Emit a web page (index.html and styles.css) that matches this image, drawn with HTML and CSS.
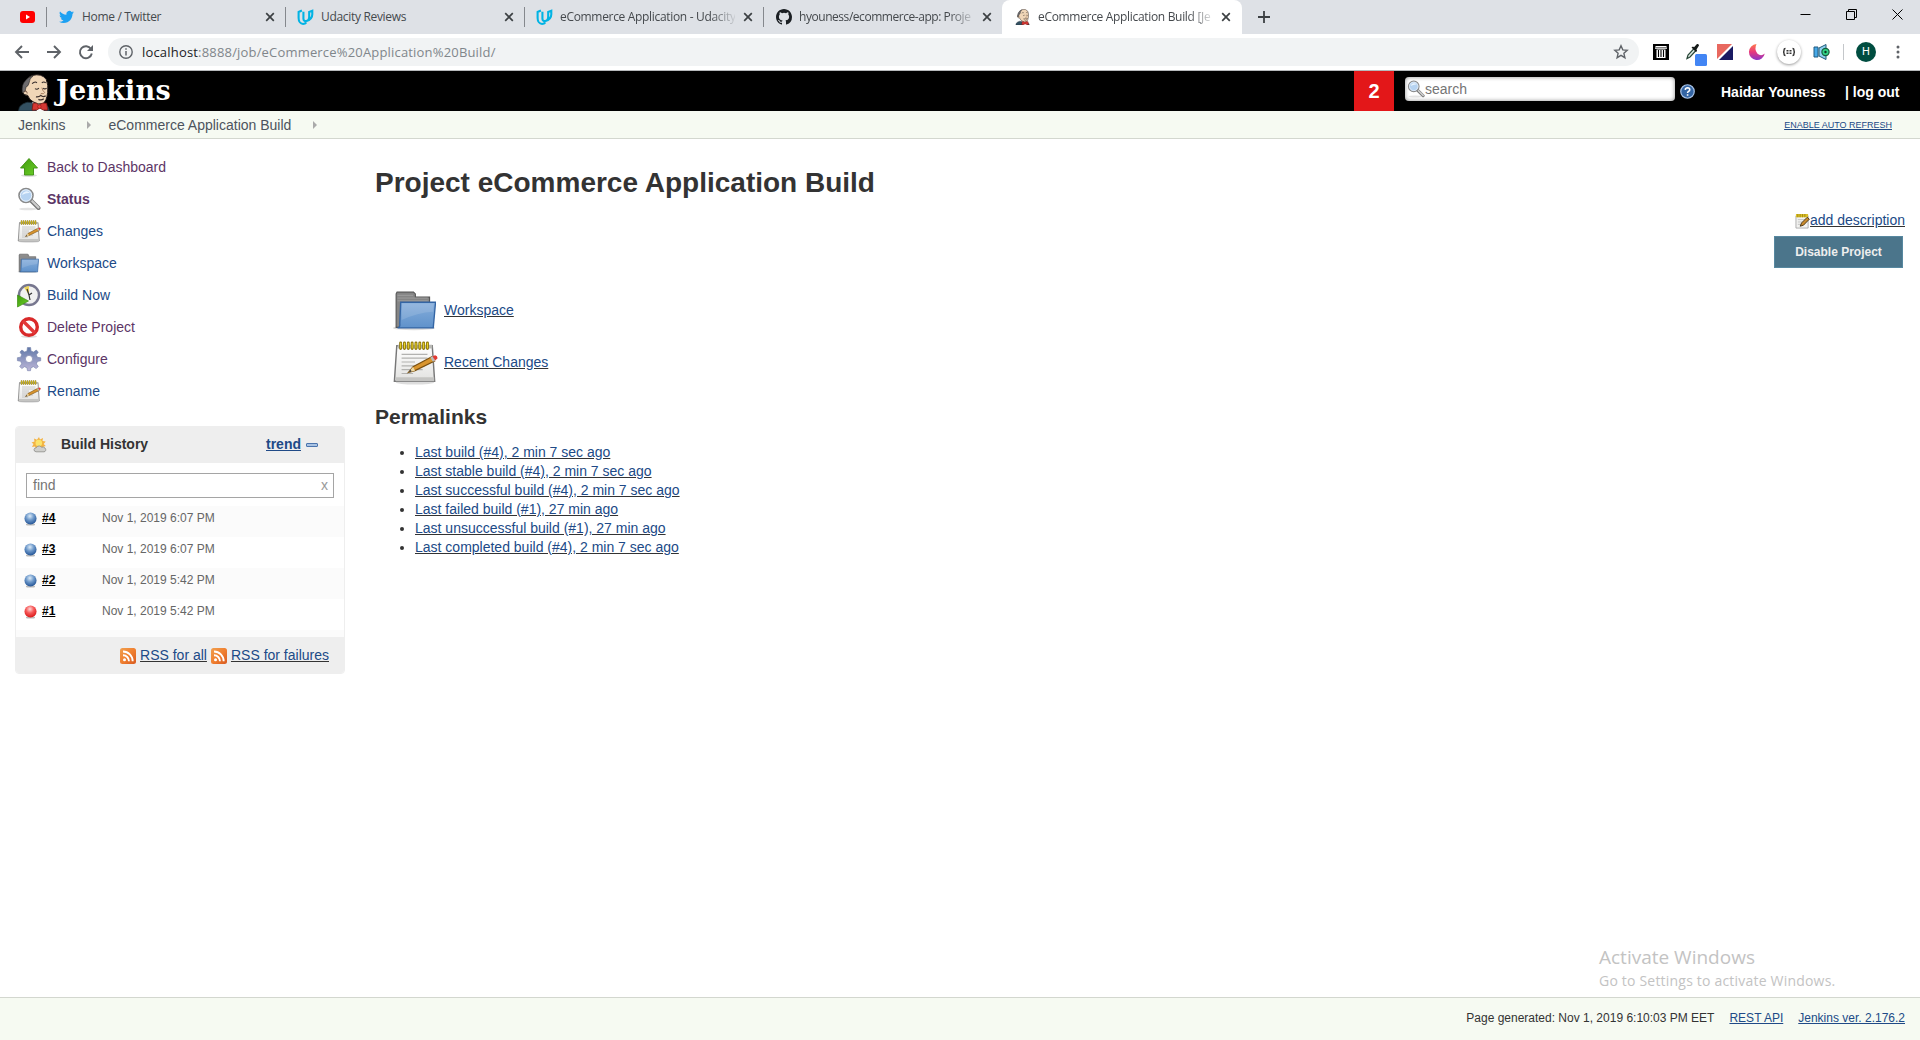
FILE: index.html
```html
<!DOCTYPE html>
<html lang="en">
<head>
<meta charset="utf-8">
<title>eCommerce Application Build [Jenkins]</title>
<link rel="stylesheet" href="styles.css">
</head>
<body>
<svg class="defs" width="0" height="0" aria-hidden="true">
  <defs>
    <linearGradient id="g-folder" x1="0" y1="0" x2="0" y2="1"><stop offset="0" stop-color="#87aedb"/><stop offset="1" stop-color="#5f92cb"/></linearGradient>
    <linearGradient id="g-green" x1="0" y1="0" x2="1" y2="1"><stop offset="0" stop-color="#3f9a0c"/><stop offset="1" stop-color="#6dd02a"/></linearGradient>
    <linearGradient id="g-gear" x1="0" y1="0" x2="0" y2="1"><stop offset="0" stop-color="#6078a8"/><stop offset="1" stop-color="#bdb6d8"/></linearGradient>
    <linearGradient id="g-rss" x1="0" y1="0" x2="1" y2="1"><stop offset="0" stop-color="#f0a050"/><stop offset=".5" stop-color="#f08030"/><stop offset="1" stop-color="#d85a20"/></linearGradient>
    <linearGradient id="g-paper" x1="0" y1="0" x2="0" y2="1"><stop offset="0" stop-color="#fff"/><stop offset="1" stop-color="#e2e2e0"/></linearGradient>
    <linearGradient id="g-moon" x1="0" y1="0" x2="0" y2="1"><stop offset="0" stop-color="#ff7a4a"/><stop offset=".5" stop-color="#e8387c"/><stop offset="1" stop-color="#8a35c8"/></linearGradient>
    <radialGradient id="g-blue" cx=".45" cy=".3" r=".65"><stop offset="0" stop-color="#dcebf8"/><stop offset=".5" stop-color="#6f9acb"/><stop offset="1" stop-color="#2c5c9c"/></radialGradient>
    <radialGradient id="g-red" cx=".45" cy=".3" r=".65"><stop offset="0" stop-color="#ffd8d8"/><stop offset=".5" stop-color="#f65a5a"/><stop offset="1" stop-color="#dd2020"/></radialGradient>
    <symbol id="i-close" viewBox="0 0 10 10"><path d="M1.2 1.2l7.6 7.6M8.8 1.2L1.2 8.8" stroke="#3c4043" stroke-width="1.7"/></symbol>
    <symbol id="i-udacity" viewBox="0 0 18 18"><path d="M5.200 1.600L1.700 3.200v6.300c0 3.600 2 6.300 4.700 6.300 1.600 0 2.900-.8 3.500-1.600M6.800 2.800v7.400c0 2 1.400 2.900 3 2.500 3.500-.9 6.400-3.600 6.400-7.200V1.800l-3.300 1.400v5.600c0 1.600-.7 2.900-1.900 3.700" fill="none" stroke="#02b3e4" stroke-width="2.200"/></symbol>
    <symbol id="i-notepad" viewBox="0 0 48 48">
      <ellipse cx="24" cy="45.500" rx="20" ry="2" fill="#ddd"/>
      <path d="M5 7h37l2.500 37h-42z" fill="url(#g-paper)" stroke="#777" stroke-width="1.500"/>
      <path d="M6 6h36v4H6z" fill="#b9b9b5"/><path d="M4 40h40v4H4z" fill="#c4c4c2"/>
      <path d="M10 16h27M10 20h27M10 24h14M10 28h24M10 32h22M10 36h12" stroke="#b2b2b0" stroke-width="1.300"/>
      <path d="M9 4v6M13 4v6M17 4v6M21 4v6M25 4v6M29 4v6M33 4v6M37 4v6" stroke="#8c7406" stroke-width="3" stroke-linecap="round"/>
      <path d="M9 4v6M13 4v6M17 4v6M21 4v6M25 4v6M29 4v6M33 4v6M37 4v6" stroke="#e9d32c" stroke-width="1.200"/>
      <path d="M17 35l5-6 19.500-10.500 3 4.500-20.500 10z" fill="#d9952e" stroke="#7a5010" stroke-width="1.200"/>
      <path d="M17 35l5-6 2 4z" fill="#eed9a5"/><path d="M17 35l2.500-3 1 1.800z" fill="#333"/>
      <path d="M40 19.300l2.300-1.300 2.800 4.500-2.400 1.200z" fill="#bbb"/><path d="M42.300 18l2.700-1q2.500.6 2.600 3l-2.500 2.500z" fill="#e23a32"/>
    </symbol>
    <symbol id="i-folder" viewBox="0 0 48 44">
      <ellipse cx="24" cy="41.500" rx="23" ry="2.500" fill="#ddd"/>
      <path d="M4.500 41V4.500l1-2h18l2 2V8H41v33z" fill="#858585" stroke="#555" stroke-width="1.200"/>
      <path d="M6 6h17M6 9h33M6 12h33" stroke="#a0a0a0" stroke-width="1"/>
      <path d="M9.500 13.500h38l-2.500 28H6q3 0 2.500-5z" fill="url(#g-folder)" stroke="#3465a4" stroke-width="1.500"/>
      <path d="M11 15h34.500l-.8 9Q28 25 10.500 33z" fill="#fff" opacity=".13"/>
    </symbol>
    <symbol id="i-search" viewBox="0 0 24 24">
      <ellipse cx="11" cy="22" rx="9" ry="1.300" fill="#e2e2e2"/>
      <path d="M14 13.500l7.500 7.500" stroke="#777" stroke-width="4" stroke-linecap="round"/><path d="M15 14l6.500 6.500" stroke="#ccc" stroke-width="2.200" stroke-linecap="round"/>
      <circle cx="9" cy="8.500" r="7" fill="#b6d3f1" stroke="#8a8a8a" stroke-width="1.600"/><circle cx="9" cy="8.500" r="5.700" fill="none" stroke="#e9f2fb" stroke-width="1"/>
      <path d="M5 8a4.500 4.500 0 018-2q-4-.5-8 2z" fill="#e8f3fd"/>
    </symbol>
    <symbol id="i-rss" viewBox="0 0 16 16"><rect width="16" height="16" rx="2.500" fill="url(#g-rss)"/><circle cx="4.500" cy="11.800" r="1.500" fill="#fff"/><path d="M3 7.200a6 6 0 016 6M3 3.500A9.700 9.700 0 0112.700 13.200" fill="none" stroke="#fff" stroke-width="1.900"/></symbol>
    <symbol id="i-ball-blue" viewBox="0 0 14 15"><ellipse cx="7" cy="13.300" rx="5" ry="1.300" fill="#bbb"/><circle cx="7" cy="7" r="6.500" fill="url(#g-blue)"/></symbol>
    <symbol id="i-ball-red" viewBox="0 0 14 15"><ellipse cx="7" cy="13.300" rx="5" ry="1.300" fill="#bbb"/><circle cx="7" cy="7" r="6.500" fill="url(#g-red)"/></symbol>
    <symbol id="i-head" viewBox="0 0 34 38">
      <path d="M0 38l1-4q3-4 8-5l14 1q7 1 8 5l1 3z" fill="#335061" stroke="#1a2a33" stroke-width=".8"/>
      <path d="M14 29l5 9h7l1-8z" fill="#f4f4f4"/>
      <path d="M7 13Q7 4 14 1.500q10-2.500 14.500 4Q31 11 30 19q-1 9-5 11.500-5 1.500-10-2-4-2-5.500-6.500-4.500 0-5.500-4 0-5 3-5z" fill="#f0d6b7" stroke="#221b1b" stroke-width="1"/>
      <path d="M4 19q-1-8 3-12 3-4 8-5-4 3-4 7-1 4-3 4-1 3-1 5z" fill="#6d6b6d" stroke="#222" stroke-width=".6"/>
      <path d="M5.500 18q3-2 3.500 2" fill="none" stroke="#6b4a3a" stroke-width=".8"/>
      <path d="M14 10q3-3 5-1M24 9q2-1.500 4 0M17 15q2 1.500 4-.5M25 14.500q2 1.500 4 0" fill="none" stroke="#332b2b" stroke-width="1.100"/>
      <path d="M24 14q1 4 3 5-1 2-4 1" fill="none" stroke="#a0775a" stroke-width=".9"/>
      <path d="M18 23.500q3 .5 5-1.500 2 2 5 .5M20.500 26q3 1.500 5.500-.5" fill="none" stroke="#3a2d2a" stroke-width="1.300"/>
      <path d="M15 30q4-1 6 2 3-3 8-2l1 7q-5 1-8-2-3 3-8 2z" fill="#d33833" stroke="#81140f" stroke-width=".8"/><circle cx="21.500" cy="33.500" r="1.800" fill="#ef3d3a" stroke="#81140f" stroke-width=".5"/>
    </symbol>
  </defs>
</svg>

<div class="tabstrip">
  <div class="tab tab-pinned"><svg class="yt" viewBox="0 0 15 12"><rect width="15" height="12" rx="3" fill="#f00"/><path d="M6 3.500l4 2.500-4 2.500z" fill="#fff"/></svg></div>
  <div class="tab"><svg class="fav tw" viewBox="0 0 24 24"><path fill="#1da1f2" d="M23.950 4.570a10 10 0 01-2.820.770 4.960 4.960 0 002.160-2.720c-.950.550-2 .950-3.130 1.180a4.920 4.920 0 00-8.380 4.480C7.690 8.090 4.070 6.130 1.640 3.160a4.820 4.820 0 00-.670 2.480c0 1.710.870 3.210 2.190 4.100a4.900 4.900 0 01-2.230-.620v.060a4.920 4.920 0 003.950 4.830 5 5 0 01-2.210.080 4.940 4.940 0 004.600 3.420A9.870 9.870 0 010 19.540a14 14 0 007.550 2.210c9.050 0 14-7.500 14-13.980 0-.210 0-.420-.020-.630a9.940 9.940 0 002.460-2.550z"/></svg><span class="title">Home / Twitter</span><svg class="close"><use href="#i-close"/></svg></div>
  <div class="tab"><svg class="fav uda"><use href="#i-udacity"/></svg><span class="title">Udacity Reviews</span><svg class="close"><use href="#i-close"/></svg></div>
  <div class="tab"><svg class="fav uda"><use href="#i-udacity"/></svg><span class="title fade">eCommerce Application - Udacity</span><svg class="close"><use href="#i-close"/></svg></div>
  <div class="tab tab-last"><svg class="fav" viewBox="0 0 16 16"><path fill="#1b1f23" d="M8 0C3.580 0 0 3.580 0 8c0 3.540 2.290 6.530 5.470 7.590.4.070.550-.170.550-.380 0-.190-.010-.820-.010-1.490-2.010.370-2.530-.490-2.690-.940-.090-.230-.480-.940-.820-1.130-.280-.150-.680-.520-.010-.530.630-.010 1.080.580 1.230.820.720 1.210 1.870.870 2.330.660.070-.520.280-.870.510-1.070-1.780-.2-3.640-.890-3.640-3.950 0-.870.310-1.590.820-2.150-.080-.2-.360-1.020.080-2.120 0 0 .670-.210 2.200.820a7.500 7.500 0 014 0c1.530-1.040 2.200-.820 2.200-.820.440 1.100.160 1.920.080 2.120.510.560.820 1.270.820 2.150 0 3.070-1.870 3.750-3.650 3.950.290.250.540.730.540 1.480 0 1.070-.010 1.930-.010 2.200 0 .210.150.460.550.380A8.010 8.010 0 0016 8c0-4.420-3.580-8-8-8z"/></svg><span class="title fade repo">hyouness/ecommerce-app: Proje</span><svg class="close"><use href="#i-close"/></svg></div>
  <div class="tab tab-active"><svg class="fav"><use href="#i-head"/></svg><span class="title fade">eCommerce Application Build [Je</span><svg class="close"><use href="#i-close"/></svg></div>
  <svg class="newtab" viewBox="0 0 12 12"><path d="M6 0v12M0 6h12" stroke="#3c4043" stroke-width="1.800"/></svg>
  <div class="winctl">
    <svg viewBox="0 0 11 11"><path d="M.500 5.500h10" stroke="#000"/></svg>
    <svg viewBox="0 0 11 11"><path d="M.500 2.500h8v8h-8zM2.500 2V.500h8v8H9" fill="none" stroke="#000"/></svg>
    <svg viewBox="0 0 11 11"><path d="M.500.500l10 10M10.500.500l-10 10" stroke="#000"/></svg>
  </div>
</div>

<div class="toolbar">
  <svg class="nav" viewBox="0 0 14 14"><path d="M14 7H1.500M7 1L1 7l6 6" fill="none" stroke="#5f6368" stroke-width="1.900"/></svg>
  <svg class="nav" viewBox="0 0 14 14"><path d="M0 7h12.500M7 1l6 6-6 6" fill="none" stroke="#5f6368" stroke-width="1.900"/></svg>
  <svg class="nav" viewBox="0 0 14 14"><path d="M12 4A6 6 0 1012.800 8.500" fill="none" stroke="#5f6368" stroke-width="1.900"/><path d="M14 0v6H8z" fill="#5f6368"/></svg>
  <div class="omnibox">
    <svg class="info" viewBox="0 0 14 14"><circle cx="7" cy="7" r="6.200" fill="none" stroke="#5f6368" stroke-width="1.400"/><path d="M7 6v4.500M7 3.300v1.500" stroke="#5f6368" stroke-width="1.500"/></svg>
    <span class="url"><b>localhost</b>:8888/job/eCommerce%20Application%20Build/</span>
    <svg class="star" viewBox="0 0 16 16"><path d="M8 1.800l1.800 4.100 4.400.4-3.300 3 1 4.400L8 11.400l-3.900 2.300 1-4.400-3.300-3 4.400-.4z" fill="none" stroke="#5f6368" stroke-width="1.400"/></svg>
  </div>
  <div class="exts">
    <svg viewBox="0 0 24 24"><rect x="4" y="4" width="16" height="16" fill="#000"/><path d="M6 7.500h12v1.300H6zM6.500 6h11v1h-11zM7.500 9.500h9v8.500h-9z" fill="#fff"/><path d="M9.500 10v7M12 10v7M14.500 10v7" stroke="#000" stroke-width="1.100"/></svg>
    <svg viewBox="0 0 24 24"><path d="M6 18.500l1-3.500 6-6.500 2 2-6 6.500z" fill="#dce9e2" stroke="#284638" stroke-width="1.200"/><path d="M10.500 7.500l1.500-1 1 .8L16 4q2-.5 2 1.500l-2.500 4 .5 1.500-1 1z" fill="#151a18"/><rect x="14" y="14" width="12" height="12" rx="1.500" fill="#4285f4"/></svg>
    <svg viewBox="0 0 24 24"><path d="M4 4h15L4 19z" fill="#e8685f"/><path d="M20 6v14H6z" fill="#191a63"/></svg>
    <svg viewBox="0 0 24 24"><path d="M11.500 4a8 8 0 108.300 9.500Q16 17 12.300 13.500 9 9 11.500 4z" fill="url(#g-moon)"/></svg>
    <svg class="round" viewBox="0 0 24 24"><path d="M8.500 8.500q-1.500 0-1.500 1.500v1q0 1-1 1 1 0 1 1v1q0 1.500 1.500 1.500M15.500 8.500q1.500 0 1.500 1.500v1q0 1 1 1-1 0-1 1v1q0 1.500-1.500 1.500M9.500 10.700h2M12.500 10.700h2M9.500 13.300h2M12.500 13.300h2" fill="none" stroke="#333" stroke-width="1.400"/></svg>
    <svg viewBox="0 0 24 24"><path d="M5 7h4v10H5z" fill="#47a9e8" stroke="#215a80"/><path d="M10 8l7-3.500v15L10 16z" fill="#8bd0ef" stroke="#235b78"/><circle cx="16.500" cy="12" r="3.600" fill="#31d487" stroke="#145c3a" stroke-width="1.200"/><circle cx="16.500" cy="12" r="1.200" fill="#0b3a25"/></svg>
  </div>
  <i class="sep"></i><span class="avatar">H</span>
  <svg class="kebab" viewBox="0 0 4 14"><circle cx="2" cy="2" r="1.500"/><circle cx="2" cy="7" r="1.500"/><circle cx="2" cy="12" r="1.500"/></svg>
</div>

<header class="jheader">
  <svg class="head"><use href="#i-head"/></svg><span class="brand">Jenkins</span>
  <span class="alerts">2</span>
  <div class="searchbox"><svg><use href="#i-search"/></svg><span>search</span></div>
  <svg class="help" viewBox="0 0 16 16"><circle cx="8" cy="8" r="7.200" fill="#3465a4" stroke="#a9c3e6" stroke-width="1.300"/><path d="M5.600 6.300q.2-2.300 2.500-2.300 2.300.1 2.300 2 0 1.200-1.300 1.900-1 .6-1 1.600M8.100 10.800v1.600" fill="none" stroke="#fff" stroke-width="1.700"/></svg>
  <b class="user">Haidar Youness</b><b class="logout">| log out</b>
</header>
<nav class="crumbs"><span>Jenkins</span><i></i><span>eCommerce Application Build</span><i></i><a class="auto">ENABLE AUTO REFRESH</a></nav>

<div class="page">
  <aside class="side">
    <ul class="tasks">
      <li><svg viewBox="0 0 24 24"><ellipse cx="12" cy="20.500" rx="8" ry="1.500" fill="#ddd"/><path d="M12 3.500l8.500 9.500h-4v7h-9v-7h-4z" fill="url(#g-green)" stroke="#3d8f12" stroke-width=".9"/></svg><a class="seen">Back to Dashboard</a></li>
      <li><svg><use href="#i-search"/></svg><a class="seen"><b>Status</b></a></li>
      <li><svg><use href="#i-notepad"/></svg><a>Changes</a></li>
      <li><svg class="sm"><use href="#i-folder"/></svg><a>Workspace</a></li>
      <li><svg viewBox="0 0 24 24"><circle cx="12" cy="12" r="10" fill="#f1f1f1" stroke="#77778f" stroke-width="2.400"/><path d="M12 12L7 4.500Q9.500 3 12 3z" fill="#edd45a"/><path d="M12 12L10 6M12 12l3-2M12 12l1 5" stroke="#333" stroke-width="1.200"/><path d="M.500 12l11 6-11 6z" fill="url(#g-green)" stroke="#3d8f12" stroke-width=".7"/></svg><a>Build Now</a></li>
      <li><svg viewBox="0 0 24 24"><ellipse cx="12" cy="21.500" rx="8" ry="1.500" fill="#ddd"/><circle cx="12" cy="12" r="8.300" fill="#fff" stroke="#d92a2a" stroke-width="3.400"/><path d="M6 6l12 12" stroke="#e23a3a" stroke-width="3.400"/></svg><a class="seen">Delete Project</a></li>
      <li><svg viewBox="0 0 24 24"><path d="M10 4l.4-3.500h3.200L14 4l2.500 1.100L19.300 3l2 2.200-1.900 2.600 1 2.500 3.300.5v3l-3.300.6-1 2.500 1.900 2.700-2.200 2-2.600-1.900-2.500 1-.5 3h-3l-.6-3-2.500-1-2.600 1.900-2.100-2.200 2-2.600-1-2.500-3.300-.6v-3l3.300-.5 1-2.500L2.900 5.100l2-2.100 2.700 2z" fill="url(#g-gear)" stroke="#7382ab" stroke-width=".6"/><circle cx="12" cy="12" r="3.600" fill="#fff" stroke="#8b92b8" stroke-width=".8"/></svg><a class="seen">Configure</a></li>
      <li><svg><use href="#i-notepad"/></svg><a>Rename</a></li>
    </ul>
    <section class="history">
      <div class="hhead"><svg viewBox="0 0 16 16"><path d="M8 0l1 2.500L12 1l-.5 3 3.200.5-2 2.500 2 2-3 1-7 1L4 9.500 1 10l1.500-3L.500 5.500l3-1L3 1.500 6 2.800z" fill="#f3b343"/><circle cx="7.800" cy="6" r="3.300" fill="#fbe36a"/><path d="M5 14.800q-2-.3-2-2.200.3-1.800 2.200-1.800 1-2.300 3.500-1.800 1 .2 1.600 1.200 2.500-.6 3.700.8 1.200 1.600.6 2.700-.5 1.100-1.600 1.100z" fill="#cfcfcc" stroke="#8b8b88" stroke-width=".8"/></svg><b>Build History</b><a class="trend">trend</a><i class="minus"></i></div>
      <div class="find"><span>find</span><em>x</em></div>
      <div class="row"><svg><use href="#i-ball-blue"/></svg><a>#4</a><span>Nov 1, 2019 6:07 PM</span></div>
      <div class="row"><svg><use href="#i-ball-blue"/></svg><a>#3</a><span>Nov 1, 2019 6:07 PM</span></div>
      <div class="row"><svg><use href="#i-ball-blue"/></svg><a>#2</a><span>Nov 1, 2019 5:42 PM</span></div>
      <div class="row"><svg><use href="#i-ball-red"/></svg><a>#1</a><span>Nov 1, 2019 5:42 PM</span></div>
      <div class="gap"></div>
      <div class="hfoot"><svg><use href="#i-rss"/></svg><a>RSS for all</a><svg><use href="#i-rss"/></svg><a>RSS for failures</a></div>
    </section>
  </aside>
  <main class="main">
    <h1>Project eCommerce Application Build</h1>
    <div class="desc"><svg viewBox="0 0 16 16"><path d="M1 2h13v13H1z" fill="#f2f2f0" stroke="#999" stroke-width=".8"/><path d="M3 6h8M3 8.500h6M3 11h5" stroke="#bbb" stroke-width=".9"/><path d="M1 0h13v3.500H1z" fill="#d9be28"/><path d="M3 0v3.500M5.500 0v3.500M8 0v3.500M10.500 0v3.500" stroke="#8c7406" stroke-width=".7"/><path d="M5.500 13l1.500-3.500L13 3.500l2.300 2L9 12z" fill="#c98a2b" stroke="#3c2b0c" stroke-width=".9"/></svg><a>add description</a></div>
    <button class="disable">Disable Project</button>
    <div class="big ws"><svg><use href="#i-folder"/></svg><a>Workspace</a></div>
    <div class="big rc"><svg><use href="#i-notepad"/></svg><a>Recent Changes</a></div>
    <h2>Permalinks</h2>
    <ul class="perma">
      <li><a>Last build (#4), 2 min 7 sec ago</a></li>
      <li><a>Last stable build (#4), 2 min 7 sec ago</a></li>
      <li><a>Last successful build (#4), 2 min 7 sec ago</a></li>
      <li><a>Last failed build (#1), 27 min ago</a></li>
      <li><a>Last unsuccessful build (#1), 27 min ago</a></li>
      <li><a>Last completed build (#4), 2 min 7 sec ago</a></li>
    </ul>
  </main>
</div>
<footer class="foot"><span>Page generated: Nov 1, 2019 6:10:03 PM EET</span><a>REST API</a><a>Jenkins ver. 2.176.2</a></footer>
<div class="activate"><p class="a1">Activate Windows</p><p class="a2">Go to Settings to activate Windows.</p></div>
</body>
</html>
```
FILE: styles.css
```css
* { box-sizing: border-box; }
body { margin: 0; height: 1040px; overflow: hidden; display: flex; flex-direction: column; background: #fff; color: #333; font: 14px/19px "Liberation Sans", Arial, sans-serif; }
svg { display: block; flex: none; overflow: visible; }
ul, h1, h2, p { margin: 0; padding: 0; }
.defs { position: absolute; }
a { color: #204a87; }

/* browser chrome */
.tabstrip { height: 34px; flex: none; background: #dee1e6; display: flex; align-items: center; font: 12px/16px "Open Sans", "Noto Sans", sans-serif; letter-spacing: -.32px; color: #45494d; }
.tab { width: 239px; height: 34px; display: flex; align-items: center; padding-left: 12px; background: linear-gradient(#85888d, #85888d) right 7px / 1px 20px no-repeat; }
.tab-pinned { width: 47px; padding-left: 20px; }
.tab-last { background: none; }
.yt { width: 15px; height: 12px; }
.fav { width: 16px; height: 16px; }
.tw { width: 15px; margin-right: 1px; }
.uda { width: 17px; height: 17px; margin: 0 0 0 -1px; }
.title { width: 175px; margin-left: 7px; white-space: nowrap; }
.fade { mask-image: linear-gradient(to right, #000 150px, transparent 178px); }
.repo { letter-spacing: -.45px; }
.close { width: 10px; height: 10px; margin-left: 8px; }
.tab-active { width: 240px; background: #fff; border-radius: 8px 8px 0 0; margin-left: -1px; padding-left: 13px; }
.newtab { width: 12px; height: 12px; margin-left: 16px; }
.winctl { margin: 0 17px 6px auto; display: flex; gap: 35px; }
.winctl svg { width: 11px; height: 11px; }

.toolbar { height: 37px; flex: none; border-bottom: 1px solid #b6b9bb; display: flex; align-items: center; padding-left: 15px; }
.nav { width: 14px; height: 14px; margin-right: 18px; }
.omnibox { width: 1531px; height: 28px; margin-left: -3px; border-radius: 14px; background: #f1f3f4; display: flex; align-items: center; padding: 0 10px 0 11px; }
.info { width: 14px; height: 14px; }
.url { margin-left: 9px; font: 13px/20px "Open Sans", "Noto Sans", sans-serif; letter-spacing: .18px; color: #80868b; }
.url b { font-weight: 400; color: #202124; }
.star { width: 16px; height: 16px; margin-left: auto; }
.exts { display: flex; gap: 8px; margin-left: 10px; }
.exts svg { width: 24px; height: 24px; }
.round { border-radius: 50%; box-shadow: 0 1px 3px rgba(0,0,0,.4); }
.sep { width: 1px; height: 16px; background: #c4c7ca; margin-left: 10px; }
.avatar { width: 20px; height: 20px; border-radius: 50%; background: #004d40; color: #fff; font: 11px/20px Roboto, sans-serif; text-align: center; margin-left: 12px; }
.kebab { width: 4px; height: 14px; margin-left: 20px; fill: #5f6368; }

/* header */
.jheader { height: 40px; flex: none; background: #000; color: #fff; display: flex; align-items: center; }
.head { width: 34px; height: 37px; margin: 3px 0 0 18px; }
.brand { font: bold 27px/30px "DejaVu Serif", Georgia, serif; margin: -1px 0 0 4px; letter-spacing: .2px; }
.alerts { width: 40px; height: 40px; margin-left: auto; background: #e31719; font: bold 20px/40px "Liberation Sans", sans-serif; text-align: center; }
.searchbox { width: 270px; height: 24px; margin: -4px 0 0 11px; border-radius: 4px; background: #fff; box-shadow: inset 0 0 4px rgba(0,0,0,.45); color: #757575; display: flex; align-items: center; padding-left: 2px; }
.searchbox svg { width: 18px; height: 18px; }
.help { width: 15px; height: 15px; margin-left: 5px; }
.user { width: 124px; margin-left: 26px; padding-top: 2px; }
.logout { width: 75px; padding-top: 2px; white-space: nowrap; }
.crumbs { height: 28px; flex: none; background: #f6faf2; border-bottom: 1px solid #d3d7cf; display: flex; align-items: center; padding: 1px 0 0 18px; color: #4d545d; }
.crumbs i { border: 4px solid transparent; border-left-color: #aaa; border-right: 0; margin: 0 17px 0 22px; }
.auto { margin: 0 28px 0 auto; font-size: 9px; text-decoration: underline; }

/* page body */
.page { height: 858px; flex: none; display: flex; }
.side { width: 375px; padding: 12px 0 0 15px; }
.tasks { list-style: none; }
.tasks li { height: 32px; display: flex; align-items: center; padding-left: 2px; gap: 6px; }
.tasks svg { width: 24px; height: 24px; }
.tasks .sm { width: 22px; height: 20px; margin-right: 2px; }
.tasks .seen { color: #5c3566; }
.history { width: 330px; height: 248px; margin-top: 19px; border: 1px solid #eee; border-radius: 4px; overflow: hidden; }
.hhead { height: 36px; background: #eee; display: flex; align-items: center; padding: 0 0 2px 15px; }
.hhead svg { width: 16px; height: 16px; margin: 1px 14px 0 0; }
.hhead b { width: 205px; }
.trend { font-weight: bold; text-decoration: underline; }
.minus { width: 12px; height: 4px; margin: 1px 0 0 5px; border: 1px solid #4b74ad; background: #a9c3e3; border-radius: 1px; }
.find { width: 308px; height: 25px; margin: 10px 0 8px 10px; border: 1px solid #a5a5a5; color: #757575; display: flex; justify-content: space-between; align-items: center; padding: 0 5px 1px 6px; }
.find em { font-style: normal; color: #999; }
.row { height: 31px; display: flex; padding: 3px 0 0 8px; font-size: 12px; color: #666; }
.row:nth-child(odd) { background: #fbfbfb; }
.row svg { width: 13px; height: 14px; margin-top: 3px; }
.row a { width: 60px; margin-left: 5px; color: #000; font-weight: bold; text-decoration: underline; }
.gap { height: 7px; background: #fbfbfb; }
.hfoot { height: 37px; background: #eee; display: flex; justify-content: flex-end; align-items: center; padding-right: 15px; text-decoration: underline; }
.hfoot svg { width: 16px; height: 16px; margin: 0 4px; }

.main { width: 1530px; display: flex; flex-direction: column; align-items: flex-start; }
h1 { font-size: 28px; line-height: 34px; padding-top: 27px; color: #333; }
.desc { align-self: flex-end; display: flex; align-items: center; margin-top: 11px; text-decoration: underline; }
.desc svg { width: 15px; height: 15px; margin-top: 2px; }
.disable { align-self: flex-end; width: 129px; height: 32px; margin: 6px 2px 0 0; border: 1px solid #5788a0; background: #4b758b; color: #eee; font: bold 12px/15px "Liberation Sans", sans-serif; }
.big { display: flex; align-items: center; padding-left: 17px; gap: 8px; text-decoration: underline; }
.big svg { width: 44px; height: 44px; }
.ws { margin-top: 20px; }
.rc { margin-top: 7px; gap: 6px; }
.rc svg { width: 46px; height: 46px; }
h2 { font-size: 21px; line-height: 26px; margin-top: 19px; }
.perma { margin-top: 13px; padding-left: 40px; text-decoration: underline; }

.foot { height: 43px; flex: none; background: #f6faf2; border-top: 1px solid #d3d7cf; display: flex; justify-content: flex-end; align-items: center; padding: 0 15px 2px 0; gap: 15px; font-size: 12px; }
.foot a { text-decoration: underline; }
.activate { position: absolute; left: 1599px; top: 944px; color: #c3c3c3; font-family: "Open Sans", "Noto Sans", sans-serif; white-space: nowrap; }
.a1 { font-size: 19px; line-height: 27px; }
.a2 { font-size: 14px; line-height: 19px; letter-spacing: .2px; }
```
